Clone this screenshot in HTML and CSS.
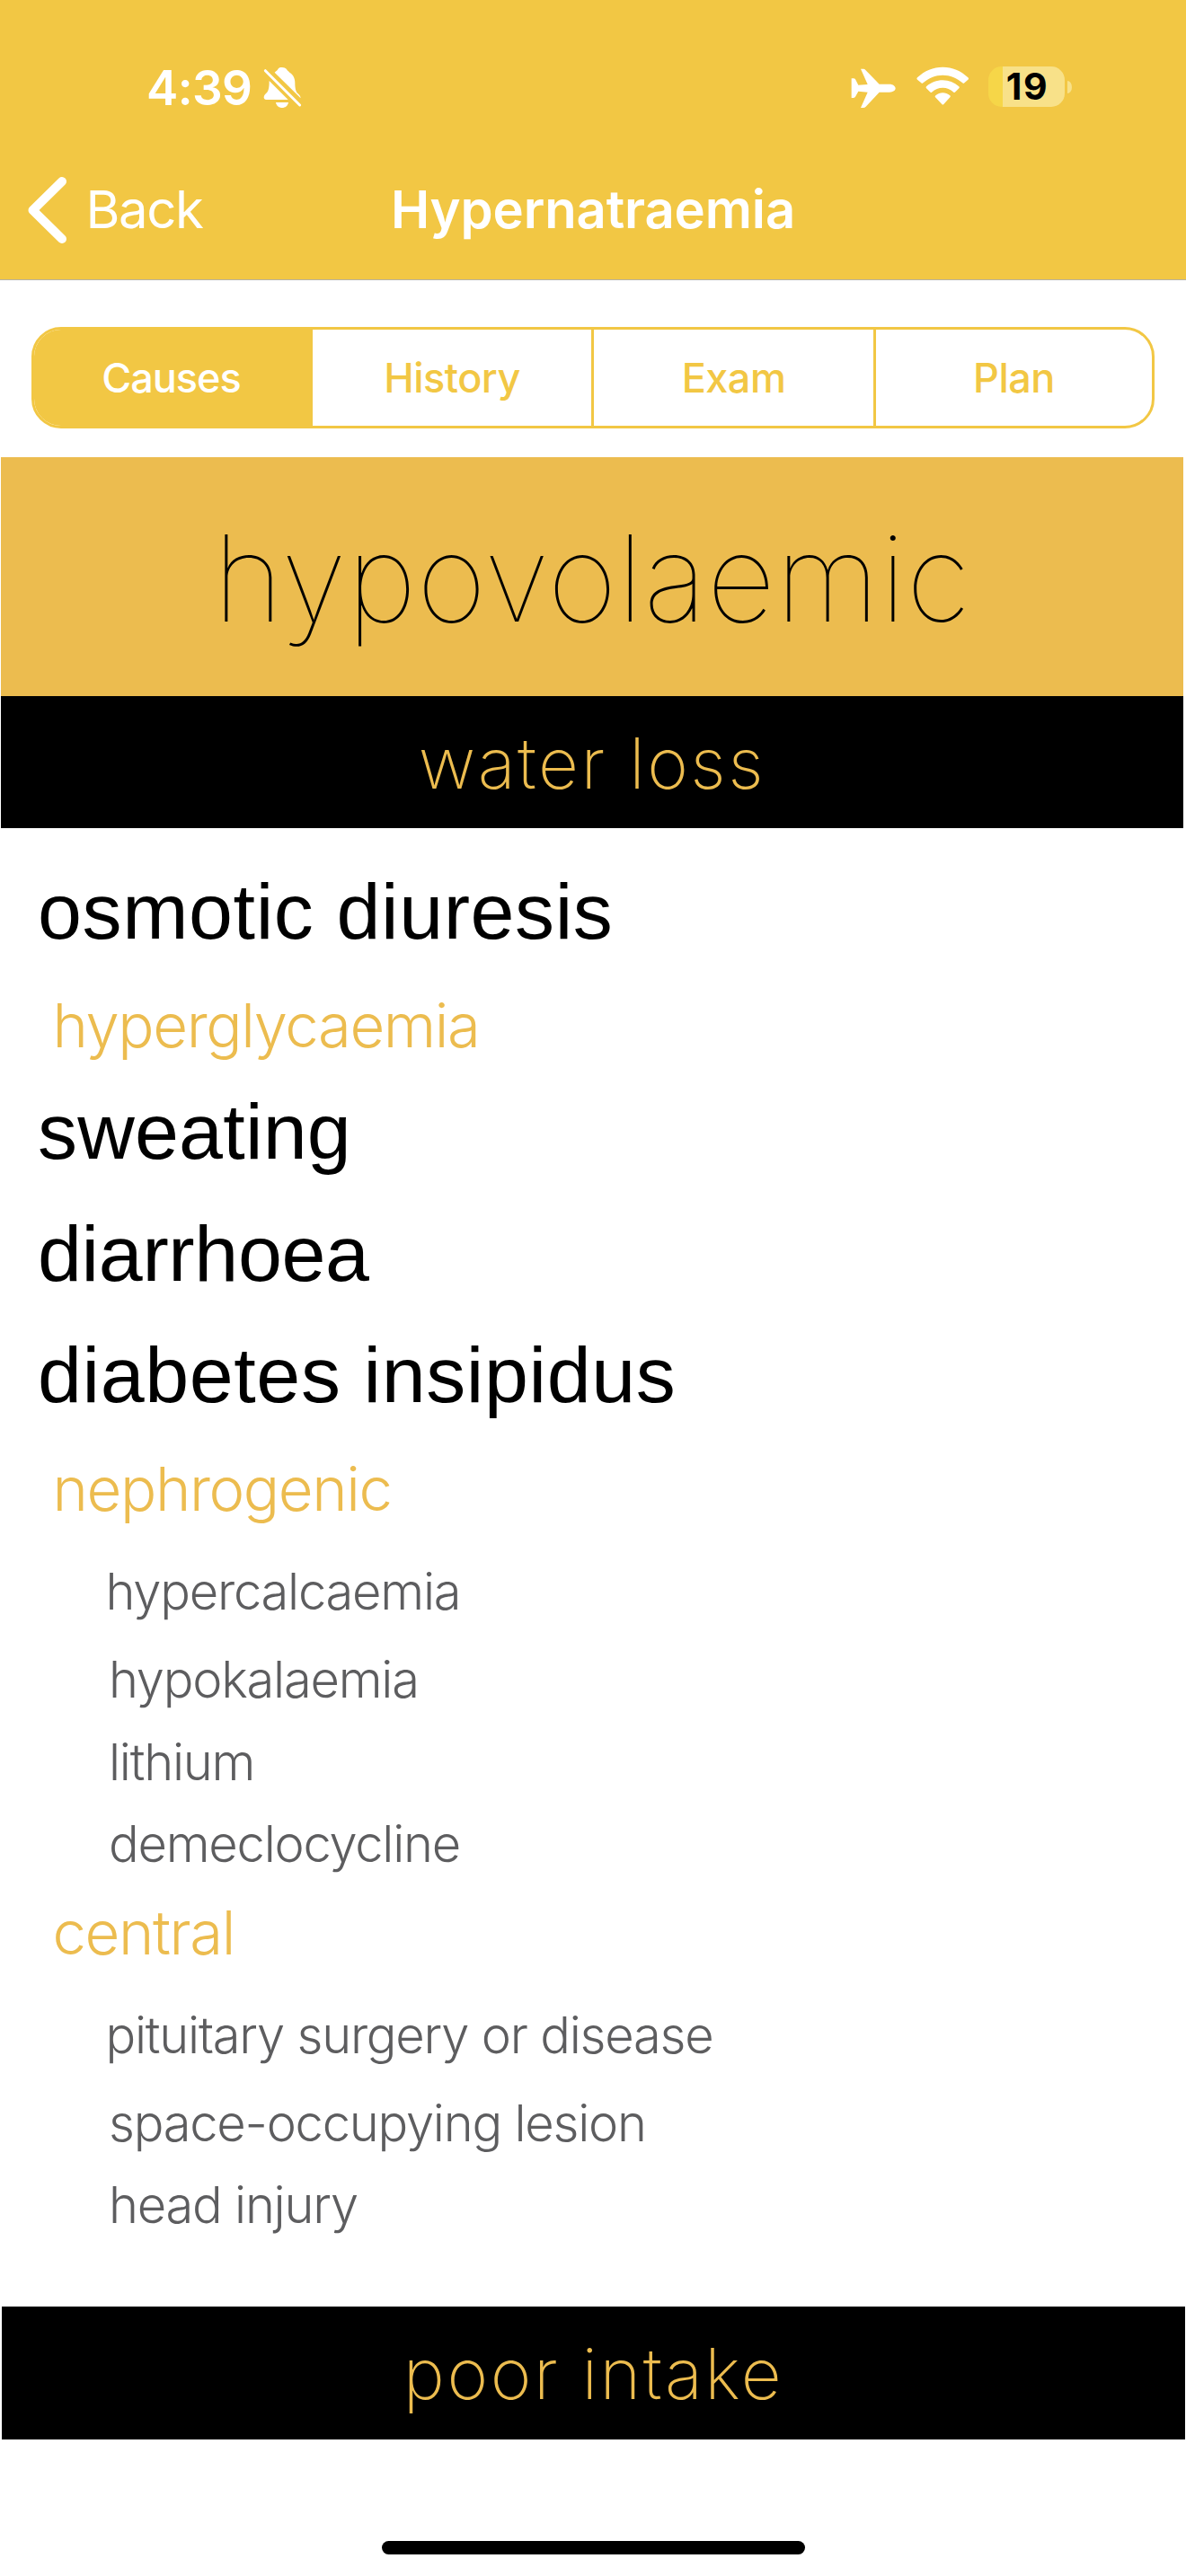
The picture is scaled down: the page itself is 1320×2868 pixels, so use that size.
FILE: index.html
```html
<!DOCTYPE html>
<html lang="en">
<head>
<meta charset="utf-8">
<title>Hypernatraemia</title>
<link rel="stylesheet" href="styles.css">
</head>
<body>
<div class="screen">
  <header class="header">
    <div class="status">
      <div class="status-left">
        <span class="clock">4:39</span>
        <svg class="bell" viewBox="40 28 130 140" aria-label="Silent">
          <path fill="#fff" d="M78 48C84 43 87 42 89 37C92 32 97 31 103 31C109 31 115 33 118 37C120 42 123 43 128 48C141 56 146 68 146 82C146 103 149 112 156 119C162 125 165 128 165 134Z"/>
          <path fill="#fff" d="M60 76L123 139H50C44 139 42 135 42 131C42 124 48 119 53 114C59 106 60 94 60 76Z"/>
          <path fill="#fff" d="M82 148H124C122 160 113 166 103 166C93 166 84 160 82 148Z"/>
          <path stroke="#fff" stroke-width="9" stroke-linecap="round" d="M47 42L162 157"/>
        </svg>
      </div>
      <div class="status-right">
        <svg class="plane" viewBox="34 33 150 134" aria-label="Airplane mode">
          <path fill="#fff" d="M36 67H43Q47 67 49 70L59 89L90 87L67 35H76Q80 35 83 39L129 86H163C175 86 183 93 183 100C183 107 175 113 163 113H129L84 161Q80 165 76 165H67L90 113L59 110L49 128Q46 132 42 132H36Z"/>
        </svg>
        <svg class="wifi" viewBox="253 28 176 132" aria-label="Wi-Fi">
          <path fill="#fff" d="M256 72Q252 69 256 65C280 42 309 30 341 30C373 30 401 42 425 65Q429 69 425 72L413 83Q410 86 407 83C388 66 365 57 341 57C316 57 294 66 275 83Q272 86 269 83Z"/>
          <path fill="#fff" d="M286 101Q283 98 286 95C302 81 320 74 341 74C361 74 379 81 395 95Q398 98 395 101L383 113Q380 117 377 114C366 104 354 99 341 99C327 99 315 104 304 114Q301 117 298 113Z"/>
          <path fill="#fff" d="M316 131Q313 128 317 125C331 113 350 113 365 125Q368 128 365 131L344 154Q341 157 338 154Z"/>
        </svg>
        <div class="battery"><div class="battery-body"><span class="battery-level">19</span></div><i class="battery-tip"></i></div>
      </div>
    </div>
    <nav class="nav">
      <a class="back">
        <svg class="chevron" viewBox="0 0 43 74"><path d="M38 5L5.500 37L38 69" fill="none" stroke="#fff" stroke-width="10" stroke-linecap="round" stroke-linejoin="round"/></svg>
        <span>Back</span>
      </a>
      <h1 class="title">Hypernatraemia</h1>
    </nav>
  </header>

  <div class="tabs">
    <div class="tab tab-active">Causes</div>
    <div class="tab">History</div>
    <div class="tab tab-divided">Exam</div>
    <div class="tab tab-divided">Plan</div>
  </div>

  <main>
    <h2 class="category">hypovolaemic</h2>
    <h3 class="group">water loss</h3>
    <div class="causes">
      <p class="cause">osmotic diuresis</p>
      <p class="subtype">hyperglycaemia</p>
      <p class="cause tight">sweating</p>
      <p class="cause cause-next tighter">diarrhoea</p>
      <p class="cause">diabetes insipidus</p>
      <p class="subtype">nephrogenic</p>
      <ul class="details">
        <li>hypercalcaemia</li>
        <li>hypokalaemia</li>
        <li>lithium</li>
        <li>demeclocycline</li>
      </ul>
      <p class="subtype subtype-next">central</p>
      <ul class="details">
        <li>pituitary surgery or disease</li>
        <li>space-occupying lesion</li>
        <li>head injury</li>
      </ul>
    </div>
    <h3 class="group group-next">poor intake</h3>
  </main>
  <div class="home-indicator"></div>
</div>
</body>
</html>
```
FILE: styles.css
```css
* { box-sizing: border-box; margin: 0; padding: 0; }
body { background: #fff; font-family: Inter, "Liberation Sans", sans-serif; }
.screen { width: 1320px; height: 2868px; display: flex; flex-direction: column; overflow: hidden; }

.header { height: 312px; flex: none; padding-top: 40px; background: #f2c744; border-bottom: 1px solid #b5b2a6; color: #fff; }
.status { height: 115px; padding: 0 127px 0 163px; display: flex; align-items: center; justify-content: space-between; }
.status-left, .status-right { display: flex; align-items: center; }
.clock { font-size: 53px; font-weight: 600; line-height: 64px; letter-spacing: -0.6px; width: 130.3px; }
.bell { width: 43.3px; height: 46.7px; }
.plane { width: 50px; height: 44.7px; position: relative; top: 1px; }
.wifi { width: 58.7px; height: 44px; margin-left: 23px; position: relative; top: -1.2px; }
.battery { margin-left: 21.6px; display: flex; align-items: center; gap: 3px; position: relative; top: -1px; }
.battery-body { width: 85px; height: 45px; border-radius: 15px; background: linear-gradient(90deg, #f6d648 16px, #f8e189 16px); display: flex; align-items: center; justify-content: center; color: #000; }
.battery-level { font-size: 41px; font-weight: 700; line-height: 45px; letter-spacing: 1.500px; padding-left: 2px; }
.battery-tip { width: 5px; height: 14px; border-radius: 0 5px 5px 0 / 0 7px 7px 0; background: #f8e189; }

.nav { height: 156px; padding: 0 31px; display: grid; grid-template-columns: 1fr auto 1fr; align-items: center; }
.back { display: flex; align-items: center; gap: 21.500px; font-size: 58px; font-weight: 400; line-height: 70px; letter-spacing: -1.380px; }
.chevron { width: 43px; height: 74px; position: relative; top: 1px; }
.title { font-size: 58px; font-weight: 600; line-height: 70px; letter-spacing: -0.13px; }

.tabs { flex: none; height: 113px; margin: 52px 35px 32px; display: grid; grid-template-columns: 310px 310px 314px 1fr; border: 3px solid #f2c744; border-radius: 33px; overflow: hidden; }
.tab { display: flex; align-items: center; justify-content: center; color: #f2c744; font-size: 45px; font-weight: 500; letter-spacing: -0.5px; }
.tab-divided { border-left: 3px solid #f2c744; }
.tab-active { padding-right: 5px; background: #f2c744; color: #fff; letter-spacing: -1px; }

.category { height: 266px; margin: 0 3px 0 1px; background: #ecbc4f; color: #000; font-size: 133px; font-weight: 100; line-height: 270px; letter-spacing: 0.6px; text-align: center; }
.group { height: 147px; margin: 0 3px 0 1px; background: #000; color: #ecbc4f; font-size: 78px; font-weight: 200; line-height: 150px; letter-spacing: 2.500px; text-align: center; }
.group-next { margin: 66px 1px 0 2px; height: 148px; }

.causes { padding-top: 25px; }
.cause { padding-left: 42px; color: #000; font-family: "Liberation Sans", Arial, sans-serif; font-size: 88px; line-height: 135px; letter-spacing: 0.6px; }
.cause-next { margin-top: 1px; }
.tight { letter-spacing: 0.2px; }
.tighter { letter-spacing: -0.35px; }
.subtype { margin-top: 9px; padding-left: 58.500px; color: #ecbc4f; font-size: 67px; font-weight: 300; line-height: 101px; letter-spacing: -1.400px; }
.subtype-next { margin-top: 1px; }
.details { list-style: none; padding: 19px 0 0 121px; color: #5d5d5f; font-size: 56px; font-weight: 300; line-height: 91.500px; letter-spacing: -1.230px; }
.details li:first-child { margin: 0 0 6.500px -3.500px; }

.home-indicator { width: 471px; height: 15px; margin: auto auto 24px; border-radius: 8px; background: #000; }
```
